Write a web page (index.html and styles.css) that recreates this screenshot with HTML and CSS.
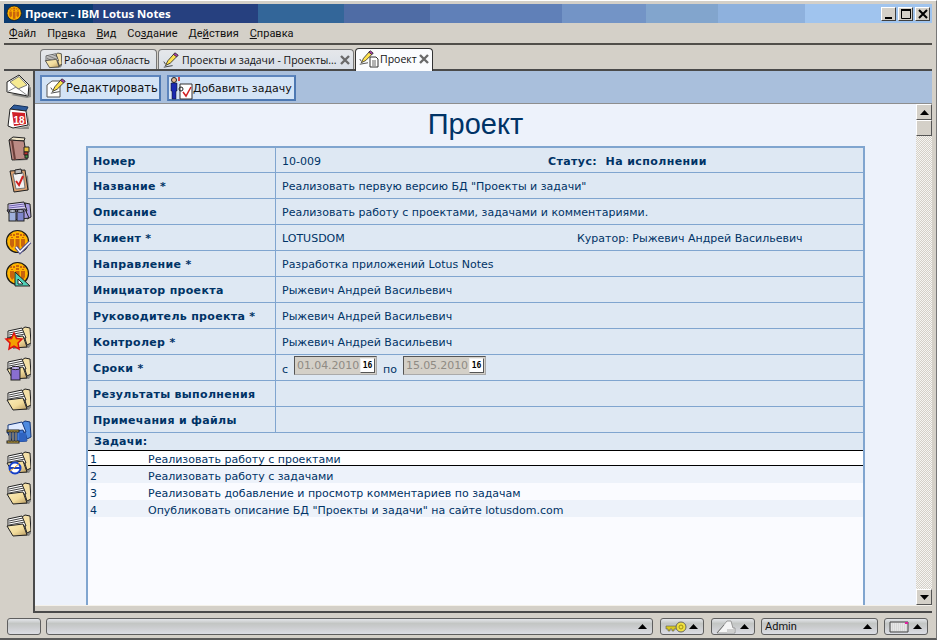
FILE: index.html
```html
<!DOCTYPE html>
<html lang="ru">
<head>
<meta charset="utf-8">
<title>Проект - IBM Lotus Notes</title>
<link rel="stylesheet" href="styles.css">
</head>
<body>
<svg class="defs" width="0" height="0">
  <defs>
    <linearGradient id="flap" x1="0" y1="0" x2="1" y2="1">
      <stop offset="0" stop-color="#fbeebc"/><stop offset=".55" stop-color="#f2dc9c"/><stop offset="1" stop-color="#b89a62"/>
    </linearGradient>
    <symbol id="folder" viewBox="0 0 26 26">
      <path d="M7 23 L24 24 L27 20 L26 9 L22 22 Z" fill="#8a8a86"/>
      <path d="M17 5 L20 3 L25 4 L26 19 L22 21 Z" fill="#f3dfa6" stroke="#222"/>
      <path d="M3 7 L17 4 L21 14 L3 15 Z" fill="#fff" stroke="#222"/>
      <path d="M4 9 L18 6 M4 11 L19 8 M4 13 L20 10" stroke="#444"/>
      <path d="M2 14 L18 12 L22 23 L8 24 Z" fill="url(#flap)" stroke="#222"/>
    </symbol>
    <symbol id="lotus" viewBox="0 0 26 26">
      <circle cx="12.500" cy="12.500" r="11" fill="#ffb400" stroke="#1a1a1a" stroke-width="1.200"/>
      <path d="M5 10h4v7l-2 2-2-3zM10.500 10h4v11h-4zM16 10h4v6l-2 3-2-2z" fill="#c8640c"/>
      <path d="M5 5h2v2H5zM8 5h2v2H8zM11 4h3v2h-3zM15 5h2v2h-2zM18 5h2v2h-2zM6 8h2v1H6zM11 7h3v2h-3zM17 8h2v1h-2z" fill="#c8640c"/>
    </symbol>
    <symbol id="pencil" viewBox="0 0 20 20">
      <path d="M3 17 L6 11 L14 2 L18 5 L9 14 Z" fill="#ffe14d" stroke="#222"/>
      <path d="M13 3 L15 1 L19 4 L17 6 Z" fill="#b040b0" stroke="#222"/>
      <path d="M1 19 L12 17 M3 15 L1 12" stroke="#222"/>
    </symbol>
    <symbol id="close" viewBox="0 0 12 12">
      <path d="M2 2 L10 10 M10 2 L2 10" stroke="#6a6a6a" stroke-width="2.400"/>
    </symbol>
    <symbol id="uptri" viewBox="0 0 9 5">
      <path d="M4.500 0 L9 5 H0 Z" fill="#000"/>
    </symbol>
  </defs>
</svg>
<div class="window">
  <header class="titlebar">
    <svg class="title-icon" viewBox="0 0 26 26"><use href="#lotus" width="26" height="26"/></svg>
    <span class="title-text">Проект - IBM Lotus Notes</span>
    <div class="winbtns">
      <button class="winbtn"><svg width="12" height="12"><path d="M2 9h7v2H2z" fill="#000"/></svg></button>
      <button class="winbtn"><svg width="12" height="12"><path d="M1.500 1.500h9v9h-9z" fill="none" stroke="#000"/><path d="M1 1h10v2H1z" fill="#000"/></svg></button>
      <button class="winbtn winbtn-close"><svg width="12" height="12"><path d="M2 2 L10 10 M10 2 L2 10" stroke="#000" stroke-width="2"/></svg></button>
    </div>
  </header>
  <nav class="menubar">
    <span><u>Ф</u>айл</span><span>Пр<u>а</u>вка</span><span><u>В</u>ид</span><span>Со<u>з</u>дание</span><span>Де<u>й</u>ствия</span><span><u>С</u>правка</span>
  </nav>
  <div class="tabstrip">
    <div class="tab tab-a">
      <svg width="18" height="18"><use href="#folder" width="18" height="18"/></svg><span>Рабочая область</span>
    </div>
    <div class="tab tab-b">
      <svg width="18" height="16"><use href="#pencil" width="18" height="16"/></svg><span>Проекты и задачи - Проекты...</span>
      <svg class="tab-x" width="12" height="12"><use href="#close" width="12" height="12"/></svg>
    </div>
    <div class="tab tab-c">
      <svg class="tab-doc" width="20" height="18" viewBox="0 0 20 18"><use href="#pencil" width="15" height="15"/><path d="M11 7h6l2 2v8h-8z" fill="#fff" stroke="#333"/><path d="M13 11h4M13 13h4M13 15h4" stroke="#666"/></svg><span>Проект</span>
      <svg class="tab-x" width="12" height="12"><use href="#close" width="12" height="12"/></svg>
    </div>
  </div>
  <div class="workspace">
    <aside class="sidebar">
      <div class="icon-group">
        <svg class="side-icon" viewBox="0 0 26 26"><path d="M6 22 L22 25 L26 24 L26 14 Z" fill="#8a8a86"/><path d="M2 9 L14 2 L24 12 L23 23 L2 19 Z" fill="#fff" stroke="#222"/><path d="M5 9 L14 3.500 L22 12 L13 16 Z" fill="#f6ea92" stroke="#777"/><path d="M2 19 L11 14 L23 23" fill="none" stroke="#888"/></svg>
        <svg class="side-icon" viewBox="0 0 26 26"><path d="M22 6 L25 22 L9 25 L24 25 Z" fill="#8a8a86"/><path d="M5 5 L9 1 L23 3 L21 7 Z" fill="#2e5a9a" stroke="#14305a"/><path d="M5 5 L21 7 L23 21 L8 24 L3 22 Z" fill="#fff" stroke="#222"/><path d="M7 8 L20 9 L21 20 L9 22 Z" fill="#d02028"/><text class="cal-num" x="8.500" y="19.500">18</text></svg>
        <svg class="side-icon" viewBox="0 0 26 26"><path d="M8 25 L23 24 L25 14 L22 23 Z" fill="#8a8a86"/><path d="M4 4 L8 1 L20 2 L19 5 Z" fill="#f0e6c8" stroke="#222"/><path d="M4 4 L19 5 L22 23 L7 24 Z" fill="#bb8a84" stroke="#222"/><path d="M7 4.500 L10 24" stroke="#6d3f3a" stroke-width="2"/><path d="M19 11h5v5h-5z" fill="#e8c040" stroke="#222"/><path d="M19 16h4v3h-4z" fill="#c03030" stroke="#222"/><path d="M20 19h3v3h-3z" fill="#4a9a4a" stroke="#222"/></svg>
        <svg class="side-icon" viewBox="0 0 26 26"><path d="M10 25 L24 23 L23 8 Z" fill="#8a8a86"/><path d="M5 4 L20 3 L23 23 L9 25 Z" fill="#d8a070" stroke="#222"/><path d="M8 7 L18 6 L20 21 L11 22 Z" fill="#f2f2f2" stroke="#777"/><path d="M10 3 L16 2 L17 6 L10 7 Z" fill="#bbb" stroke="#222"/><path d="M11 14 L14 18 L18 9" fill="none" stroke="#d02020" stroke-width="2"/></svg>
        <svg class="side-icon" viewBox="0 0 26 26"><path d="M20 5 L25 6 L26 19 L22 21 Z" fill="#a89ce0" stroke="#222"/><path d="M3 6 L19 4 L22 13 L3 14 Z" fill="#d8d0f4" stroke="#222"/><path d="M4 8 L19 6 M4 10 L20 8" stroke="#7060b0"/><path d="M2 12 L20 11 L24 20 L8 22 Z" fill="#a89ce0" stroke="#222"/><rect x="4" y="13" width="7" height="10" fill="#9fb0dc" stroke="#222"/><ellipse cx="7.500" cy="13" rx="3.500" ry="1.300" fill="#dfe6f8" stroke="#222"/><rect x="12" y="13" width="7" height="10" fill="#7f86cc" stroke="#222"/><ellipse cx="15.500" cy="13" rx="3.500" ry="1.300" fill="#c8ccf0" stroke="#222"/></svg>
        <svg class="side-icon" viewBox="0 0 26 26"><use href="#lotus" width="26" height="26"/><path d="M11 18 L15 23 L25 13" fill="none" stroke="#55558c" stroke-width="3.600"/><path d="M11 18 L15 23 L25 13" fill="none" stroke="#fff" stroke-width="1.500"/></svg>
        <svg class="side-icon" viewBox="0 0 26 26"><use href="#lotus" width="26" height="26"/><path d="M10 11 L10 25 L25 25 Z" fill="#50d0b8" stroke="#222"/><path d="M13 18 L13 23 L18 23 Z" fill="#fff" stroke="#222"/></svg>
      </div>
      <div class="icon-group">
        <svg class="side-icon" viewBox="0 0 26 26"><use href="#folder" width="26" height="26"/><path d="M9 9 L11.500 14.500 L17 15 L13 19 L14 25 L9 22 L4 25 L5 19 L1 15 L6.500 14.500 Z" fill="#f4a000" stroke="#e01010" stroke-width="1.500"/></svg>
        <svg class="side-icon" viewBox="0 0 26 26"><use href="#folder" width="26" height="26"/><rect x="6" y="13" width="9" height="12" fill="#8a6fd0" stroke="#222"/><ellipse cx="10.500" cy="13" rx="4.500" ry="1.600" fill="#c0b0f0" stroke="#222"/></svg>
        <svg class="side-icon" viewBox="0 0 26 26"><use href="#folder" width="26" height="26"/></svg>
        <svg class="side-icon" viewBox="0 0 26 26"><path d="M17 5 L20 3 L25 4 L26 19 L22 21 Z" fill="#4d8ae0" stroke="#16387a"/><path d="M3 7 L17 4 L21 14 L3 15 Z" fill="#dfeaff" stroke="#16387a"/><path d="M2 14 L18 12 L22 23 L8 24 Z" fill="#3f7ada" stroke="#16387a"/><path d="M14 15 L21 15 L22 23 L14 24Z" fill="#2f63c0"/><rect x="2" y="12" width="12" height="2" fill="#e8c040" stroke="#222"/><rect x="2" y="23" width="12" height="2" fill="#e8c040" stroke="#222"/><path d="M4 14h2v9H4zM7 14h2v9H7zM10 14h2v9h-2z" fill="#999" stroke="#222" stroke-width=".6"/></svg>
        <svg class="side-icon" viewBox="0 0 26 26"><use href="#folder" width="26" height="26"/><circle cx="10" cy="19" r="5.500" fill="#fff" stroke="#1640c8" stroke-width="2"/><path d="M5 19h10" stroke="#1640c8" stroke-width="2"/><path d="M4 23 L15 14" stroke="#e8a020"/></svg>
        <svg class="side-icon" viewBox="0 0 26 26"><use href="#folder" width="26" height="26"/></svg>
        <svg class="side-icon" viewBox="0 0 26 26"><use href="#folder" width="26" height="26"/></svg>
      </div>
    </aside>
    <main class="panel">
      <div class="actionbar">
        <button class="action action-edit">
          <svg width="20" height="20" viewBox="0 0 20 20"><path d="M1 7 L6 3 H14 V19 H1 Z" fill="#fff" stroke="#555"/><use href="#pencil" x="4" width="16" height="16"/></svg>
          <span>Редактировать</span>
        </button>
        <button class="action action-add">
          <svg width="24" height="24" viewBox="0 0 24 24"><circle cx="5" cy="4" r="2.500" fill="#e8b890" stroke="#222"/><path d="M2 7h6v8H7v8H3v-8H2z" fill="#1a2ab0" stroke="#111" stroke-width=".5"/><path d="M10 1v4" stroke="#d01010" stroke-width="1.500"/><path d="M11 8h12v15H11z" fill="#fff" stroke="#333"/><path d="M14 16 L17 20 L22 11" fill="none" stroke="#d02020" stroke-width="1.500"/><circle cx="12" cy="13" r="2" fill="none" stroke="#222"/></svg>
          <span>Добавить задачу</span>
        </button>
      </div>
      <div class="docarea">
        <div class="doc">
          <h1 class="doc-title">Проект</h1>
          <div class="form">
            <div class="row"><div class="label">Номер</div><div class="value value-split"><span class="v-num">10-009</span><span class="status">Статус:&nbsp; На исполнении</span></div></div>
            <div class="row"><div class="label">Название *</div><div class="value">Реализовать первую версию БД "Проекты и задачи"</div></div>
            <div class="row"><div class="label">Описание</div><div class="value">Реализовать работу с проектами, задачами и комментариями.</div></div>
            <div class="row"><div class="label">Клиент *</div><div class="value value-split"><span class="v-client">LOTUSDOM</span><span class="curator">Куратор: Рыжевич Андрей Васильевич</span></div></div>
            <div class="row"><div class="label">Направление *</div><div class="value">Разработка приложений Lotus Notes</div></div>
            <div class="row"><div class="label">Инициатор проекта</div><div class="value">Рыжевич Андрей Васильевич</div></div>
            <div class="row"><div class="label">Руководитель проекта *</div><div class="value">Рыжевич Андрей Васильевич</div></div>
            <div class="row"><div class="label">Контролер *</div><div class="value">Рыжевич Андрей Васильевич</div></div>
            <div class="row"><div class="label">Сроки *</div><div class="value value-dates">
              <span class="d-word">с</span><span class="datebox"><span class="d-val">01.04.2010</span><span class="d-cal">16</span></span>
              <span class="d-word d-word-po">по</span><span class="datebox"><span class="d-val">15.05.2010</span><span class="d-cal">16</span></span>
            </div></div>
            <div class="row"><div class="label">Результаты выполнения</div><div class="value"></div></div>
            <div class="row"><div class="label">Примечания и файлы</div><div class="value"></div></div>
            <div class="tasks-head">Задачи:</div>
            <div class="tasks">
              <div class="task task-sel"><span class="t-n">1</span><span>Реализовать работу с проектами</span></div>
              <div class="task task-alt"><span class="t-n">2</span><span>Реализовать работу с задачами</span></div>
              <div class="task"><span class="t-n">3</span><span>Реализовать добавление и просмотр комментариев по задачам</span></div>
              <div class="task task-alt"><span class="t-n">4</span><span>Опубликовать описание БД "Проекты и задачи" на сайте lotusdom.com</span></div>
            </div>
          </div>
        </div>
        <div class="scrollbar">
          <button class="sb-btn"><svg width="9" height="5"><use href="#uptri" width="9" height="5"/></svg></button>
          <div class="sb-thumb"></div>
          <div class="sb-track"></div>
          <button class="sb-btn"><svg class="flip" width="9" height="5"><use href="#uptri" width="9" height="5"/></svg></button>
        </div>
      </div>
      <div class="panel-foot"></div>
    </main>
  </div>
  <footer class="statusbar">
    <div class="pill pill-a"></div>
    <div class="pill pill-b"><svg width="9" height="5"><use href="#uptri" width="9" height="5"/></svg></div>
    <div class="pill pill-key">
      <svg width="22" height="12" viewBox="0 0 22 12"><path d="M1 5h11v3H9v2H7V8H5v2H3V8H1z" fill="#d8c820" stroke="#555" stroke-width=".6"/><circle cx="16" cy="6" r="5" fill="#f0e040" stroke="#666"/><circle cx="16" cy="6" r="2" fill="none" stroke="#a09010"/></svg>
      <svg width="9" height="5"><use href="#uptri" width="9" height="5"/></svg>
    </div>
    <div class="pill pill-loc">
      <svg width="20" height="14" viewBox="0 0 20 14"><path d="M1 13 L11 1 H15 L17 8 H19 V13 Z" fill="#f4f4f4" stroke="#999"/><path d="M11 9h7v4h-7z" fill="#cfcfcf"/><path d="M1 13 L8 5" stroke="#777"/></svg>
      <svg width="9" height="5"><use href="#uptri" width="9" height="5"/></svg>
    </div>
    <div class="pill pill-admin"><span>Admin</span><svg width="9" height="5"><use href="#uptri" width="9" height="5"/></svg></div>
    <div class="pill pill-mail">
      <svg width="20" height="12" viewBox="0 0 20 12"><path d="M1 1h18v10H1z" fill="#d8d8d8" stroke="#444"/><path d="M2 3h15M2 5h16M2 7h16M2 9h16" stroke="#f4f4f4" stroke-dasharray="1 1"/><path d="M16 1h3v2h-3z" fill="#e020a0"/></svg>
      <svg width="9" height="5"><use href="#uptri" width="9" height="5"/></svg>
    </div>
  </footer>
</div>
</body>
</html>
```

FILE: styles.css
```css
* { box-sizing: border-box; }
html, body { margin: 0; padding: 0; width: 937px; height: 640px; overflow: hidden; }
body { background: #d4d0c8; font-family: "DejaVu Sans", sans-serif; font-size: 11px; color: #000; }
.defs { display: block; height: 0; width: 0; }
button { padding: 0; margin: 0; font: inherit; cursor: default; }
svg { display: block; flex: none; overflow: visible; }

.window {
  width: 937px; height: 640px;
  padding: 4px 4px 2px;
  display: flex; flex-direction: column;
  border-top: 1px solid #fff;
  border-bottom: 2px solid #5a5a5a;
  border-right: 1px solid #777;
  background: #d4d0c8;
}
.titlebar {
  height: 19px; flex: none;
  margin-top: -1px;
  display: flex; align-items: center;
  background: linear-gradient(90deg,
    #0a3a70 0 89px, #26407f 89px 254px, #336699 254px 340px, #4f6ca5 340px 426px,
    #6080b8 426px 558px, #7394c6 558px 642px, #82a5cd 642px 714px, #8eb1dd 714px 801px, #a0c4ee 801px);
}
.title-icon { margin: 0 2px 0 2px; width: 17px; height: 17px; }
.title-text { color: #fff; font: bold 11.400px "Open Sans", "Noto Sans", sans-serif; white-space: nowrap; }
.winbtns { margin-left: auto; display: flex; gap: 2px; padding-right: 2px; }
.winbtn {
  width: 15px; height: 14px;
  background: #d4d0c8;
  border: 1px solid; border-color: #fff #404040 #404040 #fff;
  display: flex; align-items: center; justify-content: center;
}
.menubar {
  height: 22px; flex: none;
  display: flex; align-items: center; gap: 11px;
  padding: 1px 0 0 5px;
  font: 11px Roboto, "Noto Sans", sans-serif;
  color: #111;
  border-bottom: 2px solid #504e4a;
}
.menubar span { white-space: nowrap; }
.tabstrip {
  height: 26px; flex: none;
  display: flex; align-items: flex-end; gap: 1px;
  padding-left: 36px;
  border-bottom: 2px solid #4a4a4a;
  font: 10.500px "Open Sans", "Noto Sans", sans-serif;
  color: #111;
}
.tab {
  height: 20px;
  display: flex; align-items: center; gap: 2px;
  padding: 0 3px 0 3px;
  background: linear-gradient(#e5e7ea, #d9dfe8);
  border: 1px solid #777; border-bottom: 0;
  border-radius: 4px 4px 0 0;
  white-space: nowrap;
}
.tab-a { width: 117px; }
.tab-b { width: 196px; }
.tab-c { width: 78px; background: #fbfcfe; border-color: #333; padding-left: 3px; gap: 1px; position: relative; top: 2px; height: 23px; padding-bottom: 2px; }
.tab-x { margin-left: auto; }

.workspace { flex: 1; min-height: 0; display: flex; }
.sidebar {
  width: 29px; flex: none;
  padding: 2px 0 0 1px;
  display: flex; flex-direction: column; gap: 37px;
}
.icon-group { display: flex; flex-direction: column; gap: 5.300px; }
.side-icon { width: 26px; height: 26px; }
.cal-num { font: bold 10px "Liberation Sans", sans-serif; fill: #fff; }

.panel {
  flex: 1; min-width: 0;
  display: flex; flex-direction: column;
  border-left: 2px solid #4a4a4a;
  border-bottom: 2px solid #4a4a4a;
  height: 542px;
}
.actionbar {
  height: 33px; flex: none;
  background: #a9bfdc;
  border-bottom: 1px solid #8e8e8e;
  display: flex; gap: 6px; padding: 4px 0 0 5px;
}
.action {
  height: 26px;
  display: flex; align-items: center;
  background: #d4e4f6;
  border: 2px solid; border-color: #5d85bd #4d78b2 #4d78b2 #5d85bd;
  font: 11.500px "DejaVu Sans", sans-serif;
  color: #111;
  white-space: nowrap;
}
.action-edit { width: 121px; padding-left: 4px; gap: 0; }
.action-add { width: 129px; padding-left: 0; gap: 0; font-size: 11px; }

.docarea { flex: 1; min-height: 0; display: flex; }
.doc { flex: 1; min-width: 0; background: #edf2fb; display: flex; flex-direction: column; }
.doc-title {
  margin: 5px 0 0; height: 37px; text-align: center;
  font: normal 29px/30px "Liberation Sans", sans-serif;
  color: #003366;
}
.form {
  margin-left: 51px; width: 779px; flex: 1;
  border: solid #80a5cf; border-width: 2px 2px 0 2px;
  background: #fafbff;
  color: #003366;
  display: flex; flex-direction: column;
}
.row {
  height: 26px; flex: none;
  display: grid; grid-template-columns: 188px 1fr;
  background: #dee8f3;
  border-bottom: 1px solid #80a5cf;
}
.row:first-child { height: 25px; }
.label {
  border-right: 1px solid #80a5cf;
  font: bold 11px/24px "DejaVu Sans", sans-serif;
  padding: 2px 0 0 5px;
  white-space: nowrap;
  letter-spacing: .32px;
}
.value { font: 11px/24px "DejaVu Sans", sans-serif; padding: 2px 0 0 6px; white-space: nowrap; }
.value-split { display: flex; }
.v-num { width: 266px; }
.status { font-weight: bold; letter-spacing: .4px; }
.v-client { width: 295px; }
.value-dates { display: flex; align-items: flex-start; padding-top: 0; }
.d-word { position: relative; top: 3px; }
.d-word-po { margin: 0 0 0 6px; }
.datebox {
  margin: 1px 0 0 6px;
  width: 83px; height: 19px;
  display: flex; align-items: center; justify-content: space-between;
  background: #d4d0c8;
  border: 1px solid; border-color: #555 #aaa #aaa #555;
  padding: 0 1px 0 2px;
}
.d-val { font: 11px "DejaVu Sans", sans-serif; color: #8f8b84; letter-spacing: -.1px; }
.d-cal {
  width: 15px; height: 15px; background: #fff;
  border: 1px solid; border-color: #eee #555 #555 #eee;
  font: bold 8px/13px "DejaVu Sans Mono", monospace; color: #000; text-align: center;
}
.tasks-head {
  height: 17px; flex: none; background: #dee8f3;
  font: bold 11px/16px "DejaVu Sans", sans-serif; padding: 1px 0 0 6px;
  letter-spacing: .32px;
}
.tasks { display: flex; flex-direction: column; font: 11px/16px "DejaVu Sans", sans-serif; }
.task { height: 17px; display: flex; white-space: nowrap; padding-top: 3px; }
.task-sel { height: 16px; padding-top: 2px; background: #fff; border-top: 1px solid #000; border-bottom: 1px solid #000; line-height: 14px; }
.task-alt { background: #edf2fa; }
.t-n { width: 60px; padding-left: 2px; }

.scrollbar { width: 16px; flex: none; display: flex; flex-direction: column; background: #d4d0c8; }
.sb-btn {
  height: 16px; width: 16px; flex: none;
  background: #d4d0c8;
  border: 1px solid; border-color: #fff #555 #555 #fff;
  display: flex; align-items: center; justify-content: center;
}
.sb-thumb { height: 16px; flex: none; border: 1px solid; border-color: #fff #555 #555 #fff; background: #d4d0c8; }
.sb-track { flex: 1; background: repeating-conic-gradient(#d4d0c8 0 25%, #f6f5f2 0 50%) 0 0 / 2px 2px; }
.flip { transform: rotate(180deg); }
.panel-foot { height: 6px; flex: none; background: #d4d0c8; border-top: 1px solid #f4f1ea; }

.statusbar {
  height: 18px; flex: none;
  margin-top: 5px;
  display: flex; gap: 6px; padding: 0 3px;
}
.pill {
  height: 17px;
  display: flex; align-items: center; justify-content: space-between;
  padding: 0 5px 0 4px;
  border: 1px solid #5f5f5f;
  border-radius: 3px;
  background: linear-gradient(#e4e6ea 0, #c3c6c4 30%, #c9cbcc 50%, #dcdde4 100%);
}
.pill-a { width: 34px; }
.pill-b { width: 607px; margin-left: -1px; margin-right: 1px; justify-content: flex-end; }
.pill-key { width: 44px; margin-right: 1px; }
.pill-loc { width: 44px; }
.pill-admin { width: 117px; font: 11px Roboto, "Noto Sans", sans-serif; color: #111; padding-left: 3px; }
.pill-mail { width: 44px; }
```
